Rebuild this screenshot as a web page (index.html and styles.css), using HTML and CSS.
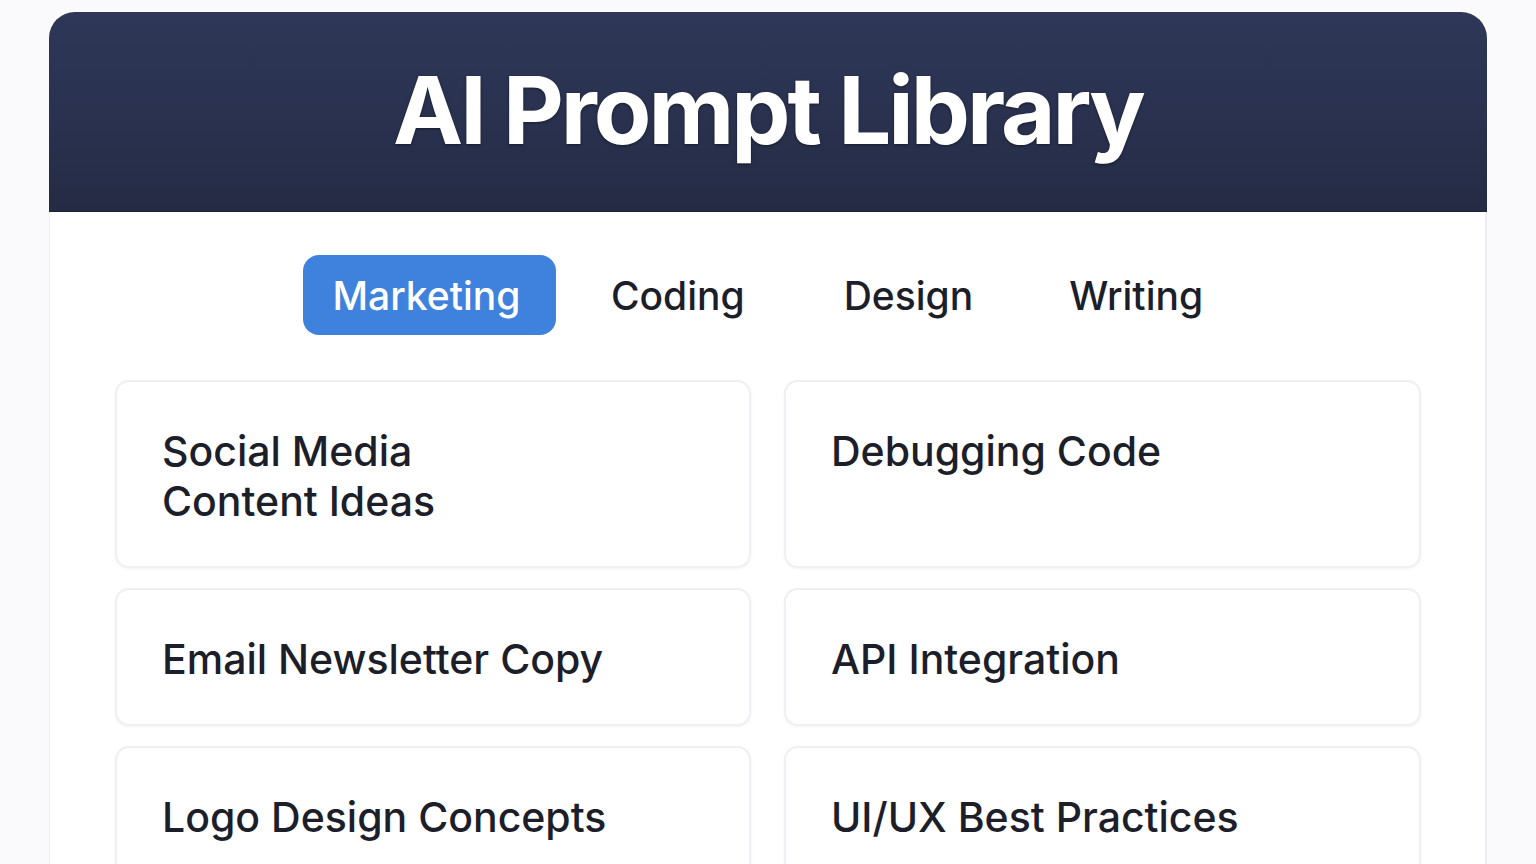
FILE: index.html
```html
<!DOCTYPE html>
<html lang="en">
<head>
<meta charset="utf-8">
<title>AI Prompt Library</title>
<link rel="stylesheet" href="styles.css">
</head>
<body>
<div class="app">
  <header class="hero">
    <h1 class="title">AI Prompt Library</h1>
  </header>
  <main class="panel">
    <nav class="tabs">
      <span class="tab tab-active">Marketing</span>
      <span class="tab tab-coding">Coding</span>
      <span class="tab tab-design">Design</span>
      <span class="tab tab-writing">Writing</span>
    </nav>
    <section class="grid">
      <div class="card">Social Media<br>Content Ideas</div>
      <div class="card">Debugging Code</div>
      <div class="card">Email Newsletter Copy</div>
      <div class="card">API Integration</div>
      <div class="card">Logo Design Concepts</div>
      <div class="card">UI/UX Best Practices</div>
    </section>
  </main>
</div>
</body>
</html>
```
FILE: styles.css
```css
html, body {
  margin: 0;
  padding: 0;
  background: #faf9fc;
  font-family: Inter, "Noto Sans", "Liberation Sans", sans-serif;
  color: #1c1e2a;
}
.app {
  width: 1438px;
  margin: 12px 0 0 49px;
}
.hero {
  height: 200px;
  box-sizing: border-box;
  border-radius: 26px 26px 0 0;
  background: linear-gradient(180deg, #2e3757 0%, #2a3250 50%, #252b44 100%);
  border-bottom: 1px solid #1d2236;
  display: flex;
  align-items: center;
  justify-content: center;
}
.title {
  margin: 0;
  font-size: 94px;
  font-weight: 700;
  letter-spacing: -3px;
  color: #ffffff;
  text-shadow: 0 1px 3px rgba(0, 0, 0, 0.45);
  line-height: 1;
  padding-bottom: 4px;
}
.panel {
  background: #ffffff;
  border-left: 1px solid #f1f0f5;
  border-right: 2px solid #eeedf2;
  padding: 43px 64px 0 65px;
  min-height: 700px;
}
.tabs {
  display: flex;
  justify-content: center;
  align-items: center;
  gap: 0;
  margin-bottom: 45px;
}
.tab {
  display: flex;
  align-items: center;
  justify-content: center;
  height: 80px;
  box-sizing: border-box;
  padding: 0 30px;
  font-size: 39px;
  font-weight: 500;
  color: #1c1e2a;
  border-radius: 16px;
}
.tab-active {
  background: #3f82dd;
  color: #ffffff;
  width: 253px;
  padding: 0 36px 0 30px;
}
.tab-coding { margin-left: 25px; }
.tab-design { margin-left: 39px; }
.tab-writing { margin-left: 36px; }
.grid {
  display: grid;
  grid-template-columns: 636px 637px;
  column-gap: 33px;
  row-gap: 20px;
}
.card {
  background: #ffffff;
  border: 2px solid #f0eff4;
  border-radius: 14px;
  box-shadow: 0 1px 3px rgba(30, 30, 60, 0.05);
  padding: 44px 45px 40px;
  font-size: 41px;
  line-height: 50px;
  font-weight: 500;
  color: #1c1e2a;
}
```
